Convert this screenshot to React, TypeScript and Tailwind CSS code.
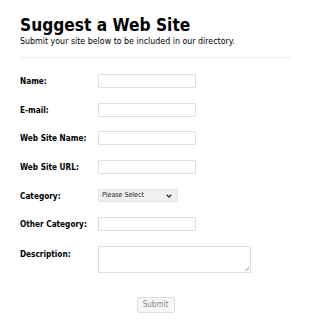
import React from "react";

const font = {
  fontFamily: '"DejaVu Sans Condensed", "DejaVu Sans", Verdana, sans-serif',
  fontStretch: "condensed" as const,
};

function Row({ label, children }: { label: string; children: React.ReactNode }) {
  return (
    <div className="flex items-center h-[14px]">
      <div className="w-[78px] shrink-0 text-[8.2px] leading-[10px] font-bold text-black">{label}</div>
      {children}
    </div>
  );
}

const inputCls = "w-[98px] h-[14px] border border-[#dedede] bg-white rounded-[1px]";

export default function App() {
  return (
    <div className="w-[310px] h-[325px] bg-white" style={font}>
      <div className="pl-[20px] pr-[19px] pt-[15px]">
        <h1 className="text-[17.2px] font-bold leading-[20px] text-black">Suggest a Web Site</h1>
        <p className="text-[8.8px] leading-[11px] text-black mt-[1px]">Submit your site below to be included in our directory.</p>
        <div className="mt-[10px] border-t border-[#ededed]" />
        <div className="mt-[16px] flex flex-col gap-[14.67px]">
          <Row label="Name:"><div className={inputCls} /></Row>
          <Row label="E-mail:"><div className={inputCls} /></Row>
          <Row label="Web Site Name:"><div className={inputCls} /></Row>
          <Row label="Web Site URL:"><div className={inputCls} /></Row>
          <Row label="Category:">
            <div className="w-[80px] h-[13px] border border-[#e3e3e3] bg-[#f0f0f0] flex items-center justify-between pl-[3px] pr-[5px]">
              <span className="text-[7px] leading-[9px] text-[#222]">Please Select</span>
              <svg width="6" height="4" viewBox="0 0 6 4"><path d="M0.7 0.7 L3 3 L5.3 0.7" stroke="#333" strokeWidth="1.3" fill="none" /></svg>
            </div>
          </Row>
          <Row label="Other Category:"><div className={inputCls} /></Row>
          <div className="flex items-start h-[27px]">
            <div className="w-[78px] shrink-0 text-[8.2px] leading-[10px] font-bold text-black pt-[3px]">Description:</div>
            <div className="relative w-[153px] h-[27px] border border-[#dedede] bg-white">
              <svg className="absolute right-[1px] bottom-[1px]" width="5" height="5" viewBox="0 0 5 5"><path d="M1 5 L5 1 M3 5 L5 3" stroke="#999" strokeWidth="0.8" /></svg>
            </div>
          </div>
        </div>
        <div className="flex justify-center mt-[24px]">
          <div className="w-[38px] h-[16px] border border-[#dedede] bg-[#f7f7f7] rounded-[2px] flex items-center justify-center text-[8px] leading-[10px] text-[#888]">Submit</div>
        </div>
      </div>
    </div>
  );
}
